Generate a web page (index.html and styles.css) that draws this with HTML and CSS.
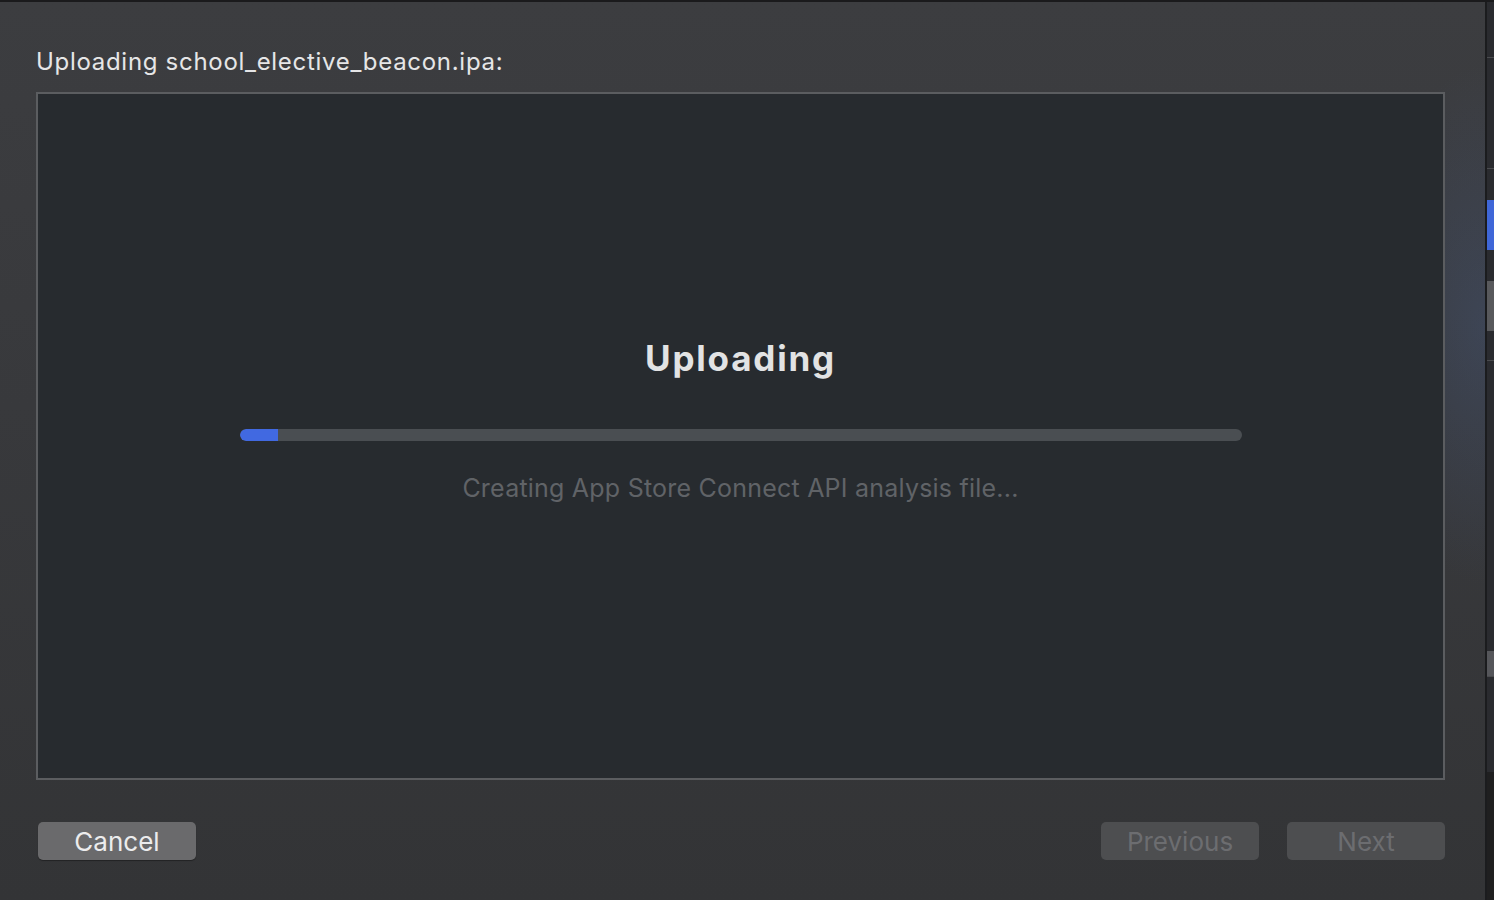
FILE: index.html
```html
<!DOCTYPE html>
<html>
<head>
<meta charset="utf-8">
<link rel="stylesheet" href="styles.css">
</head>
<body>
<div class="screen">
  <div class="dialog">
    <div class="title">Uploading school_elective_beacon.ipa:</div>
    <div class="panel">
      <div class="heading">Uploading</div>
      <div class="track"><div class="fill" style="width:3.8%"></div></div>
      <div class="status">Creating App Store Connect API analysis file...</div>
    </div>
    <div class="actions">
      <button class="btn btn-active">Cancel</button>
      <div class="spacer"></div>
      <button class="btn btn-disabled">Previous</button>
      <button class="btn btn-disabled">Next</button>
    </div>
  </div>
  <div class="divider"></div>
  <div class="behind">
    <div class="seg seg-a"></div>
    <div class="seg seg-b"></div>
    <div class="seg seg-blue"></div>
    <div class="seg seg-c"></div>
    <div class="seg seg-gray"></div>
    <div class="seg seg-d"></div>
    <div class="seg seg-e"></div>
    <div class="seg seg-gray2"></div>
    <div class="seg seg-f"></div>
    <div class="seg seg-dark"></div>
  </div>
</div>
</body>
</html>
```
FILE: styles.css
```css
* { box-sizing: border-box; }
html, body { margin: 0; padding: 0; }
body {
  width: 1494px;
  height: 900px;
  overflow: hidden;
  background: #2b2c30;
  font-family: Inter, "Noto Sans", "Liberation Sans", sans-serif;
}
.screen {
  display: flex;
  height: 900px;
  border-top: 2px solid #1a1a1c;
}
.dialog {
  width: 1485px;
  display: flex;
  flex-direction: column;
  padding: 45px 40px 0 36px;
  background:
    radial-gradient(ellipse 120px 260px at 100% 36%, rgba(70, 90, 130, 0.35), rgba(70, 90, 130, 0) 100%),
    linear-gradient(180deg, #3c3d40 0%, #38393c 45%, #333436 100%);
}
.title {
  font-size: 24px;
  line-height: 29px;
  color: #e6e6e7;
  letter-spacing: 0.7px;
}
.panel {
  margin-top: 16px;
  height: 688px;
  border: 2px solid #5b5d60;
  background: #272b2f;
  display: flex;
  flex-direction: column;
  align-items: center;
  padding-top: 244px;
}
.heading {
  font-size: 35px;
  line-height: 40px;
  font-weight: 700;
  color: #e2e3e4;
  letter-spacing: 1.8px;
}
.track {
  margin-top: 51px;
  width: 1002px;
  height: 12px;
  border-radius: 6px;
  background: #4a4e52;
  overflow: hidden;
  margin-left: 1px;
}
.fill {
  height: 100%;
  background: #4169e1;
  border-radius: 6px 0 0 6px;
}
.status {
  margin-top: 32px;
  font-size: 25px;
  line-height: 30px;
  color: #606367;
  letter-spacing: 0.22px;
}
.actions {
  margin-top: 42px;
  display: flex;
  gap: 28px;
  padding-left: 2px;
}
.spacer { flex: 1; }
.btn {
  width: 158px;
  height: 38px;
  border: none;
  border-radius: 5px;
  font-family: Inter, "Noto Sans", "Liberation Sans", sans-serif;
  font-size: 26px;
  line-height: 40px;
  padding: 0;
}
.btn-active {
  background: #6a6a6c;
  color: #ececed;
  box-shadow: 0 1px 1px rgba(0,0,0,0.35);
}
.btn-disabled {
  background: #4d4e50;
  color: #6c6d70;
}
.divider {
  width: 2px;
  background: #1b1c1e;
}
.behind {
  flex: 1;
  display: flex;
  flex-direction: column;
  background: #2a2b2f;
}
.seg { flex: none; }
.seg-a { height: 56px; border-bottom: 1px solid #4a4b4e; }
.seg-b { height: 111px; border-bottom: 1px solid #4a4b4e; }
.seg-c { height: 31px; }
.seg-blue { margin-top: 31px; height: 50px; background: #3f67d8; }
.seg-gray { height: 50px; background: #58595c; }
.seg-d { height: 30px; border-bottom: 1px solid #4a4b4e; }
.seg-e { height: 290px; }
.seg-gray2 { height: 25px; background: #55565a; }
.seg-f { height: 34px; border-top: 1px solid #4a4b4e; margin-top: 0; }
.seg-dark { flex: 1; background: #1f1f20; margin-top: 62px; }
```
